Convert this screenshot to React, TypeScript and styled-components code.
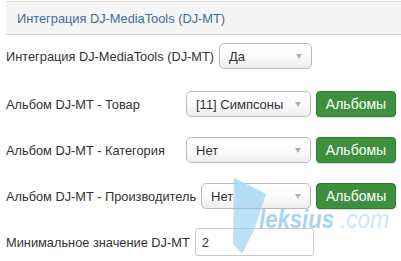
import React from 'react';
import styled, { createGlobalStyle } from 'styled-components';

const GlobalStyle = createGlobalStyle`
  html, body {
    margin: 0;
    padding: 0;
    background: #fff;
  }
  body {
    font-family: "Liberation Sans", Arial, sans-serif;
    font-size: 13px;
    color: #333;
  }
`;

const Page = styled.div`
  position: relative;
  width: 401px;
  height: 261px;
  overflow: hidden;
  padding-top: 1px;
  box-sizing: border-box;
`;

const Heading = styled.div`
  margin-left: 6px;
  height: 32px;
  display: flex;
  align-items: center;
  padding-left: 11px;
  background: #f5f5f5;
  border-top: 1px solid #dcdcdc;
  border-bottom: 1px solid #d4d4d4;
  color: #3a6e9f;
  font-size: 12.8px;
`;

const Form = styled.div`
  padding: 8px 0 0 6px;
  display: flex;
  flex-direction: column;
`;

const Row = styled.div<{ gap: number }>`
  display: flex;
  align-items: center;
  height: 26px;
  margin-bottom: ${(p) => p.gap}px;
`;

const Label = styled.label`
  min-width: 175px;
  margin-right: 5px;
  white-space: nowrap;
  font-size: 12.8px;
  color: #333;
`;

const Select = styled.div<{ width: number }>`
  position: relative;
  width: ${(p) => p.width}px;
  height: 26px;
  box-sizing: border-box;
  border: 1px solid #b9b9b9;
  border-radius: 5px;
  background: linear-gradient(#ffffff 0%, #fbfbfb 50%, #eeeeee 100%);
  display: flex;
  align-items: center;
  padding-left: 9px;
  color: #333;
`;

const Arrow = styled.span`
  position: absolute;
  right: 9px;
  top: 10px;
  width: 0;
  height: 0;
  border-left: 3.5px solid transparent;
  border-right: 3.5px solid transparent;
  border-top: 5px solid #b0b0b0;
`;

const GreenButton = styled.button`
  margin-left: 5px;
  width: 80px;
  height: 26px;
  border: 1px solid #2f7a2f;
  border-radius: 4px;
  background: #3e8f3e;
  color: #fff;
  font-family: "Liberation Sans", Arial, sans-serif;
  font-size: 14px;
  padding: 0;
  box-shadow: 0 1px 1px rgba(0, 0, 0, 0.15);
`;

const TextInput = styled.div`
  width: 119px;
  height: 28px;
  box-sizing: border-box;
  border: 1px solid #ccc;
  border-radius: 3px;
  background: #fff;
  padding-left: 6px;
  display: flex;
  align-items: center;
  color: #333;
`;

const Watermark = styled.svg`
  position: absolute;
  left: 228px;
  top: 166px;
  pointer-events: none;
`;

const rows = [
  { label: 'Альбом DJ-MT - Товар', value: '[11] Симпсоны', width: 125 },
  { label: 'Альбом DJ-MT - Категория', value: 'Нет', width: 125 },
  { label: 'Альбом DJ-MT - Производитель', value: 'Нет', width: 110 },
];

export default function App() {
  return (
    <Page>
      <GlobalStyle />
      <Heading>Интеграция DJ-MediaTools (DJ-MT)</Heading>
      <Form>
        <Row gap={22}>
          <Label>Интеграция DJ-MediaTools (DJ-MT)</Label>
          <Select width={93}>
            Да
            <Arrow />
          </Select>
        </Row>
        {rows.map((r) => (
          <Row gap={20} key={r.label}>
            <Label>{r.label}</Label>
            <Select width={r.width}>
              {r.value}
              <Arrow />
            </Select>
            <GreenButton>Альбомы</GreenButton>
          </Row>
        ))}
        <Row gap={0}>
          <Label>Минимальное значение DJ-MT</Label>
          <TextInput>2</TextInput>
        </Row>
      </Form>
      <Watermark width="173" height="95" viewBox="0 0 173 95">
        <polygon points="6,12 38,28 27,62 14,88 5,78" fill="#7cc4ee" opacity="0.5" />
        <polygon points="6,12 38,28 24,38 8,32" fill="#a9dbf5" opacity="0.55" />
        <text
          x="31"
          y="62"
          textLength="75"
          lengthAdjust="spacingAndGlyphs"
          fontFamily="'Liberation Sans', Arial, sans-serif"
          fontStyle="italic"
          fontWeight="bold"
          fontSize="25"
          fill="#5fb3e6"
          opacity="0.55"
        >
          leksius
        </text>
        <text
          x="112"
          y="62"
          textLength="49"
          lengthAdjust="spacingAndGlyphs"
          fontFamily="'Liberation Sans', Arial, sans-serif"
          fontStyle="italic"
          fontSize="25"
          fill="#9fd3f2"
          opacity="0.55"
        >
          .com
        </text>
      </Watermark>
    </Page>
  );
}
